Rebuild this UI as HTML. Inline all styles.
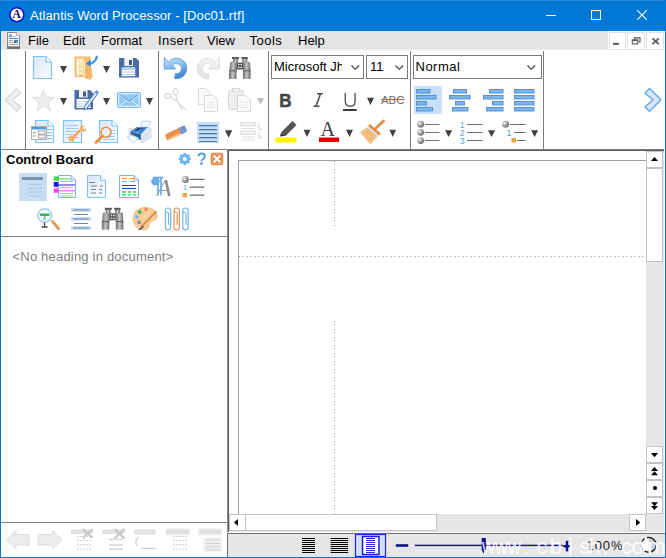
<!DOCTYPE html>
<html><head><meta charset="utf-8">
<style>
*{margin:0;padding:0;box-sizing:border-box}
html,body{width:666px;height:558px;overflow:hidden;background:#fff;font-family:"Liberation Sans",sans-serif}
.a{position:absolute}
#title{left:0;top:0;width:666px;height:31px;background:#0078d7}
#ttext{left:30px;top:8px;color:#fff;font-size:13px;white-space:pre;letter-spacing:0.1px}
#bl{left:0;top:0;width:1px;height:558px;background:#0078d7}
#br{left:665px;top:0;width:1px;height:558px;background:#0078d7}
#bb{left:0;top:557px;width:666px;height:1px;background:#0078d7}
#menu{left:1px;top:31px;width:664px;height:18px;background:#e4e4e4;border-bottom:1px solid #ededed;height:19px}
.mi{top:33px;font-size:13px;color:#000;white-space:pre}
.sep{width:1px;background:#7a7a7a}
.mdib{top:32px;width:18px;height:18px;background:#fff;border:1px solid #ddd}
.box{background:#fff;border:1px solid #7a7a7a}
.ctext{font-size:13px;color:#000;white-space:pre}
.sb{background:#fff;border:1px solid #c2c2c8}
.track{background:#e6e6e6}
</style></head><body>
<div class="a" id="title"></div>
<div class="a" style="left:0;top:0;width:666px;height:1px;background:#2f8ade"></div>
<div class="a" id="ttext">Atlantis Word Processor - [Doc01.rtf]</div>
<!-- title icon -->
<svg class="a" style="left:0;top:0" width="30" height="30" viewBox="0 0 30 30">
<circle cx="16.85" cy="14.65" r="7" fill="#fff" stroke="#1414c8" stroke-width="1.5"/>
<text x="16.7" y="17.9" text-anchor="middle" font-family="Liberation Serif" font-weight="bold" font-size="11.5" fill="#0a0a6a">A</text>
</svg>
<!-- caption buttons -->
<div class="a" style="left:546px;top:15px;width:10px;height:1px;background:#fff"></div>
<div class="a" style="left:591px;top:10px;width:10px;height:10px;border:1px solid #fff"></div>
<svg class="a" style="left:637px;top:10px" width="10" height="10" viewBox="0 0 10 10"><path d="M0 0L10 10M10 0L0 10" stroke="#fff" stroke-width="1.1"/></svg>

<div class="a" id="menu"></div>
<div class="a mi" style="left:28px">File</div>
<div class="a mi" style="left:63px">Edit</div>
<div class="a mi" style="left:101px">Format</div>
<div class="a mi" style="left:158px;letter-spacing:0.4px">Insert</div>
<div class="a mi" style="left:207px">View</div>
<div class="a mi" style="left:249.5px;letter-spacing:0.5px">Tools</div>
<div class="a mi" style="left:298px">Help</div>


<svg class="a" style="left:0;top:0" width="666" height="60" viewBox="0 0 666 60">
<rect x="608" y="31" width="57" height="19" fill="#fff"/>
<rect x="609.5" y="32.5" width="16" height="17" fill="#fff" stroke="#e0e0e0" stroke-width="1"/>
<rect x="627.5" y="32.5" width="17" height="17" fill="#fff" stroke="#e0e0e0" stroke-width="1"/>
<rect x="646.5" y="32.5" width="17" height="17" fill="#fff" stroke="#e0e0e0" stroke-width="1"/>
<rect x="613" y="42.8" width="6" height="2" fill="#5a5a5a"/>
<path d="M634.5 39.3 V37.8 H640 V42 H638.5" fill="none" stroke="#5a5a5a" stroke-width="1.2"/>
<rect x="632.3" y="40" width="5.5" height="4" fill="none" stroke="#5a5a5a" stroke-width="1.1"/>
<path d="M632.3 40.3 H637.8" stroke="#5a5a5a" stroke-width="1.6"/>
<path d="M652.5 38.3 L658.8 44.2 M658.8 38.3 L652.5 44.2" stroke="#5a5a5a" stroke-width="1.8"/>
<!-- menu doc icon -->
<path d="M7.5 32.5 H16.5 L19.5 35.5 V48.5 H7.5 Z" fill="#fff" stroke="#8a8a8a" stroke-width="1"/>
<rect x="7" y="46.3" width="13" height="2.5" fill="#707070"/>
<path d="M16.5 32.5 V35.5 H19.5" fill="#eee" stroke="#aaa" stroke-width="0.8"/>
<path d="M9 37.3 L10.5 34 L12 37.3 M9.6 36 H11.4" fill="none" stroke="#3c7ad8" stroke-width="0.9"/>
<path d="M13 36.5 H16" stroke="#999" stroke-width="0.7"/>
<path d="M9 38.5 H18" stroke="#4a78c0" stroke-width="0.9"/>
<path d="M9 40.5 H13 M9 42.5 H13 M9 44.5 H18" stroke="#888" stroke-width="0.8"/>
<rect x="14" y="39.8" width="4" height="3" fill="#3a8ae0"/>
<rect x="14" y="41.5" width="1.5" height="1.3" fill="#333"/>
</svg>
<!-- mdi buttons -->

<!-- toolbar separators -->
<div class="a sep" style="left:25px;top:51px;height:98px"></div>
<div class="a sep" style="left:158px;top:51px;height:98px"></div>
<div class="a sep" style="left:268px;top:51px;height:98px"></div>
<div class="a sep" style="left:410px;top:51px;height:98px"></div>
<div class="a sep" style="left:543px;top:51px;height:98px"></div>

<!-- combo boxes -->
<div class="a box" style="left:271px;top:55px;width:93px;height:24px"></div>
<div class="a ctext" style="left:274px;top:59px;width:68px;overflow:hidden">Microsoft Jh</div>
<div class="a box" style="left:366px;top:55px;width:42px;height:24px"></div>
<div class="a ctext" style="left:370px;top:59px">11</div>
<div class="a box" style="left:413px;top:55px;width:129px;height:24px"></div>
<div class="a ctext" style="left:415.5px;top:59px;letter-spacing:0.5px">Normal</div>


<svg class="a" style="left:0;top:0" width="666" height="558"><g fill="none" stroke="#333" stroke-width="1.1">
<path d="M351.5 65.5 L355.3 69.3 L359.1 65.5"/>
<path d="M395.5 65.5 L399.3 69.3 L403.1 65.5"/>
<path d="M527.5 65.5 L531.3 69.3 L535.1 65.5"/>
</g></svg>
<!-- toolbar bottom line -->
<div class="a" style="left:1px;top:149px;width:226px;height:1px;background:#808080"></div>
<div class="a" style="left:227px;top:149px;width:437px;height:1px;background:#7a7a7a"></div>
<div class="a" style="left:228px;top:150px;width:436px;height:1px;background:#5e5e5e"></div>

<!-- left pane -->
<div class="a" style="left:6px;top:152px;font-size:13px;font-weight:bold;color:#000;white-space:pre">Control Board</div>
<div class="a" style="left:1px;top:236px;width:226px;height:1px;background:#808080"></div>
<div class="a" style="left:12.5px;top:249px;font-size:13px;color:#808080;white-space:pre;letter-spacing:0.2px">&lt;No heading in document&gt;</div>
<div class="a" style="left:1px;top:522px;width:226px;height:1px;background:#808080"></div>

<!-- splitter -->
<div class="a" style="left:227px;top:149px;width:1px;height:383px;background:#8a8a8a"></div>
<div class="a" style="left:228px;top:150px;width:1px;height:382px;background:#5e5e5e"></div>

<!-- doc page border -->
<div class="a" style="left:238px;top:160px;width:408px;height:1px;background:#a0a0a0"></div>
<div class="a" style="left:238px;top:160px;width:1px;height:354px;background:#a0a0a0"></div>

<!-- v scrollbar -->
<div class="a track" style="left:646px;top:151px;width:18px;height:363px"></div>
<div class="a sb" style="left:646px;top:151px;width:17px;height:17px"></div>
<div class="a sb" style="left:646px;top:168px;width:17px;height:94px"></div>
<div class="a sb" style="left:646px;top:446px;width:17px;height:17px"></div>
<div class="a sb" style="left:646px;top:463px;width:17px;height:17px"></div>
<div class="a sb" style="left:646px;top:480px;width:17px;height:17px"></div>
<div class="a sb" style="left:646px;top:497px;width:17px;height:17px"></div>

<!-- h scrollbar -->
<div class="a track" style="left:229px;top:514px;width:435px;height:18px"></div>
<div class="a" style="left:229px;top:532px;width:436px;height:1px;background:#fafafa"></div>
<div class="a sb" style="left:229px;top:514px;width:17px;height:17px"></div>
<div class="a sb" style="left:245px;top:514px;width:192px;height:17px"></div>
<div class="a sb" style="left:629px;top:514px;width:17px;height:17px"></div>

<!-- status bar -->
<div class="a" style="left:227px;top:533px;width:438px;height:1px;background:#707070"></div>
<div class="a" style="left:227px;top:533px;width:1px;height:24px;background:#707070"></div>
<div class="a track" style="left:228px;top:534px;width:437px;height:23px"></div>
<div class="a" style="left:586.5px;top:538px;font-size:13px;color:#1a1a1a;white-space:pre;letter-spacing:0.9px">100%</div>


<svg class="a" style="left:0;top:0" width="666" height="558" viewBox="0 0 666 558">
<defs>
<linearGradient id="docg" x1="0" y1="0" x2="1" y2="1"><stop offset="0" stop-color="#d8e4fb"/><stop offset="0.6" stop-color="#eef5fd"/><stop offset="1" stop-color="#fafcff"/></linearGradient>
<linearGradient id="blueg" x1="0" y1="0" x2="0" y2="1"><stop offset="0" stop-color="#a9d2f6"/><stop offset="1" stop-color="#3f8ddb"/></linearGradient>
<radialGradient id="ballg" cx="0.35" cy="0.35" r="0.7"><stop offset="0" stop-color="#f4f4f4"/><stop offset="0.6" stop-color="#9a9a9a"/><stop offset="1" stop-color="#5e5e5e"/></radialGradient>
<linearGradient id="binog" x1="0" y1="0" x2="1" y2="0"><stop offset="0" stop-color="#6e6e6e"/><stop offset="0.5" stop-color="#c4c4c4"/><stop offset="1" stop-color="#6a6a6a"/></linearGradient>
</defs>
<!-- chevrons -->
<path d="M20.8 93 L16.5 88.6 L5 99.7 L16.5 111.2 L20.8 107 L12.5 99.7 Z" fill="#efefef" stroke="#d9d9d9" stroke-width="1.3" stroke-linejoin="round"/>
<path d="M645 93 L649.5 88.6 L661 99.7 L649.5 111.2 L645 107 L653 99.7 Z" fill="#dde6fa" stroke="#5aaaf0" stroke-width="1.4" stroke-linejoin="round"/>

<!-- group1 row1 -->
<path d="M33.5 56.5 H46 L51.5 62 V78.5 H33.5 Z" fill="url(#docg)" stroke="#7cc4f8" stroke-width="1.2"/>
<path d="M46 56.5 V62 H51.5" fill="#fff" stroke="#7cc4f8" stroke-width="1.2"/>
<path d="M60 66 H67 L63.5 73 Z" fill="#404040"/>
<!-- open folder -->
<path d="M74.5 56.5 H90.5 V77 H74.5 Z" fill="#f2bd72"/>
<path d="M76.5 58.5 H84 V75 H76.5 Z" fill="#f9e9b8"/>
<path d="M77.8 58.5 V76" stroke="#fff" stroke-width="1.2"/>
<path d="M83.5 60.5 L90.5 63.5 L92.8 76.5 L90 80 L83.5 77.5 Z" fill="#f3b86a"/>
<path d="M84.3 61 V77.5" stroke="#fff" stroke-width="0.9"/>
<path d="M78.5 67 H82 M78.5 71 H82" stroke="#f3c888" stroke-width="1"/>
<path d="M87 66 L88 66.5 M86.5 70 L87.5 70.5 M88.5 73 L89.5 73.5" stroke="#e8874a" stroke-width="1"/>
<path d="M96.8 56.8 C96 60.5 93 63.5 89 63.6" fill="none" stroke="#4a96e4" stroke-width="2.4" stroke-linecap="round"/>
<path d="M90.5 59.3 L85.8 63.8 L91 66.8 Z" fill="#3d88dc"/>
<path d="M103 66 H110 L106.5 73 Z" fill="#404040"/>
<!-- save -->
<path d="M119 58 H136 L139 61 V77.5 H119 Z" fill="#4a6da7"/>
<rect x="124.3" y="58" width="8.7" height="8" fill="#f4f4f4"/>
<rect x="129" y="60" width="3" height="5" fill="#3a5a98"/>
<rect x="121.7" y="67.2" width="13.5" height="9" fill="#fff"/>
<path d="M122 69.5 H135 M122 72 H135 M122 74.5 H135" stroke="#b4cdea" stroke-width="1"/>
<path d="M122 68 H135" stroke="#6fb2ee" stroke-width="1"/>

<!-- group1 row2 -->
<path d="M43.5 89.5 L46.3 97.3 L54.5 97.5 L48 102.6 L50.4 110.8 L43.5 106 L36.6 110.8 L39 102.6 L32.5 97.5 L40.7 97.3 Z" fill="#eeeeee" stroke="#dedede" stroke-width="1"/>
<path d="M60 98 H67 L63.5 105 Z" fill="#404040"/>
<!-- save as -->
<path d="M74.5 90 H90 L93 93 V109.5 H74.5 Z" fill="#4a6da7"/>
<rect x="79" y="90" width="8.5" height="7.5" fill="#f4f4f4"/>
<rect x="83" y="91.5" width="3" height="5" fill="#3a5a98"/>
<rect x="76.5" y="99" width="14" height="9" fill="#fff"/>
<path d="M77 101.5 H90 M77 104 H90 M77 106.5 H90" stroke="#b4cdea" stroke-width="1"/>
<path d="M84.5 106.5 L95.2 92 L97.6 93.8 L87 108.3 L84 109.8 Z" fill="#dce9f8" stroke="#3a68b0" stroke-width="0.9"/>
<path d="M95.2 92 L96.5 90.3 L98.9 92.1 L97.6 93.8 Z" fill="#5a90d8"/>
<path d="M103 98 H110 L106.5 105 Z" fill="#404040"/>
<!-- mail -->
<rect x="117.5" y="92.5" width="23" height="15" rx="1.5" fill="#8ecaf7" stroke="#72bdf5" stroke-width="1.2"/>
<rect x="118.8" y="93.8" width="20.4" height="12.4" fill="none" stroke="#fff" stroke-width="0.9"/>
<path d="M119.5 94.5 L129 101.5 L138.5 94.5" fill="none" stroke="#3a6fc0" stroke-width="0.8"/>
<path d="M120 95.5 L129 102.5 L138 95.5" fill="none" stroke="#fff" stroke-width="0.7"/>
<path d="M119.5 106 L126.5 100.5 M138.5 106 L131.5 100.5" fill="none" stroke="#f0f8ff" stroke-width="0.9"/>
<path d="M146 98 H153 L149.5 105 Z" fill="#404040"/>

<!-- group1 row3 -->
<path d="M35.5 120.5 H48 L53.5 126 V142.5 H35.5 Z" fill="url(#docg)" stroke="#7cc4f8" stroke-width="1.1"/>
<path d="M48 120.5 V126 H53.5" fill="#fff" stroke="#7cc4f8" stroke-width="1.1"/>
<path d="M47 129.5 H52 M47 132.5 H52 M47 135.5 H52 M47 138.5 H52" stroke="#8cc2ef" stroke-width="1"/>
<rect x="31.5" y="126.5" width="15" height="13" fill="#fdfdfd" stroke="#a6a6a6" stroke-width="0.9"/>
<rect x="32" y="127" width="14" height="2.5" fill="#4f9be6"/>
<path d="M33 132.5 H36 M33 136 H36" stroke="#9b9b9b" stroke-width="1"/>
<rect x="38.5" y="131" width="6.5" height="3" fill="none" stroke="#9b9b9b" stroke-width="0.9"/>
<rect x="38.5" y="135" width="6.5" height="3" fill="none" stroke="#9b9b9b" stroke-width="0.9"/>

<path d="M63.5 120.5 H81.5 V142.5 H63.5 Z" fill="url(#docg)" stroke="#7cc4f8" stroke-width="1.1"/>
<path d="M66 125.5 H78 M66 128.5 H78 M66 131.5 H78 M66 134.5 H78 M66 137.5 H78" stroke="#9ccaf2" stroke-width="1"/>
<path d="M72.5 138 L81.5 129" stroke="#f3b468" stroke-width="3" stroke-linecap="round"/>
<path d="M80 126.8 L82.5 124.8 L84 126.5 L82.5 128 L84.5 129.5 L86 128 L86.3 130.3 L83.5 132.3 L80.5 130.5 Z" fill="#f3b468"/>
<path d="M68 137.5 L71 135.3 L74.5 139 L73.5 142.8 L72 141 L70 142 L69 140 Z" fill="#f3b468"/>
<path d="M74 137 L80 131" stroke="#e08a40" stroke-width="0.8" stroke-dasharray="1 1"/>
<path d="M99.5 120.5 H112 L117.5 126 V142.5 H99.5 Z" fill="url(#docg)" stroke="#7cc4f8" stroke-width="1.1"/>
<path d="M112 120.5 V126 H117.5" fill="#fff" stroke="#7cc4f8" stroke-width="1.1"/>
<path d="M109 130.5 H115 M109 133.5 H115 M109 136.5 H115 M103 139.5 H115" stroke="#9ccaf2" stroke-width="1"/>
<circle cx="106" cy="132.3" r="5" fill="#e8f2fb" fill-opacity="0.8" stroke="#e9903c" stroke-width="1.6"/>
<path d="M102.5 136 L96 142.5" stroke="#e9903c" stroke-width="2.6" stroke-linecap="round"/>

<!-- printer -->
<path d="M140.6 127 L142.3 121.3 H150.8 L148.1 127.3 Z" fill="#fafdff" stroke="#9fcbef" stroke-width="0.9"/>
<path d="M129 128.5 H132 V134.6 H129 Z" fill="#e8eaee" stroke="#c4c8ce" stroke-width="0.6"/>
<path d="M130.5 131.5 L136.5 127 H148 L141 134.6 Z" fill="#3d80d8"/>
<path d="M133 130.5 L137.5 128 H145 M134 132.5 H140" stroke="#7fb2ec" stroke-width="0.8"/>
<path d="M130.5 131.5 L141 134.6 V140 L130.5 137 Z" fill="#2f5f9e"/>
<path d="M141 134.6 L148 127 L151 128.5 V137.5 L141.5 143 Z" fill="#dde8f3" stroke="#b8cde2" stroke-width="0.6"/>
<path d="M143.5 137 L149 133.5 M143.5 140 L149 136.5" stroke="#a9c9ea" stroke-width="0.7" stroke-dasharray="1 1"/>
<path d="M127 137.3 L131 134.8 L138.6 138 L133.5 142.6 Z" fill="#fafdff" stroke="#9fcbef" stroke-width="0.9"/>
<!-- group2 -->
<defs><linearGradient id="undog" x1="0" y1="0" x2="0.3" y2="1"><stop offset="0" stop-color="#d2e8fc"/><stop offset="0.45" stop-color="#8cc0f2"/><stop offset="1" stop-color="#3f86d8"/></linearGradient>
<linearGradient id="redog" x1="0" y1="0" x2="0.3" y2="1"><stop offset="0" stop-color="#f6f6f6"/><stop offset="1" stop-color="#e2e2e2"/></linearGradient></defs>
<path d="M164.3 57.5 L168.5 62 A10.3 10.3 0 1 1 174.5 78.6 L175.5 73.4 A5 5 0 1 0 172.5 65.5 L175.5 69 H164.3 Z" fill="url(#undog)" stroke="#5b8fd0" stroke-width="0.8" stroke-linejoin="round"/>
<path transform="translate(383.8 0) scale(-1 1)" d="M164.3 57.5 L168.5 62 A10.3 10.3 0 1 1 174.5 78.6 L175.5 73.4 A5 5 0 1 0 172.5 65.5 L175.5 69 H164.3 Z" fill="url(#redog)" stroke="#dadada" stroke-width="0.8" stroke-linejoin="round"/>
<!-- binoculars -->
<g id="bino">
<path d="M230 62.5 Q230.5 61.5 233 61.5 H237 V70.5 H229.5 Z" fill="url(#binog)"/>
<path d="M250 62.5 Q249.5 61.5 247 61.5 H243 V70.5 H250.5 Z" fill="url(#binog)"/>
<rect x="229" y="70.5" width="7.5" height="8.5" rx="0.8" fill="url(#binog)"/>
<rect x="243" y="70.5" width="7.6" height="8.5" rx="0.8" fill="url(#binog)"/>
<path d="M229 70.8 H236.5 M243 70.8 H250.6" stroke="#555" stroke-width="1"/>
<rect x="233" y="58" width="5" height="4.5" fill="url(#binog)"/>
<rect x="242.3" y="58" width="5" height="4.5" fill="url(#binog)"/>
<rect x="232" y="57" width="7" height="2" fill="#5a5a5a"/>
<rect x="241.3" y="57" width="6.5" height="2" fill="#5a5a5a"/>
<rect x="237" y="62.5" width="6" height="7" fill="#555"/>
<circle cx="238.8" cy="64.6" r="0.8" fill="#eee"/><circle cx="241.2" cy="64.6" r="0.8" fill="#eee"/>
<circle cx="238.8" cy="67.4" r="0.8" fill="#eee"/><circle cx="241.2" cy="67.4" r="0.8" fill="#eee"/>
</g>
<!-- scissors -->
<g fill="none" stroke="#d7d7d7" stroke-width="1.1">
<ellipse cx="175.5" cy="91.5" rx="2.2" ry="3.2"/>
<ellipse cx="168" cy="96" rx="3.2" ry="2.2"/>
<path d="M175.5 95 L178.5 104 L186.5 110 M170.5 97.5 L178 101.5 L182 110.5"/>
</g>
<!-- copy -->
<g fill="#fafafa" stroke="#d9d9d9" stroke-width="1">
<path d="M198.5 88.5 H206 L210 92.5 V104.5 H198.5 Z"/>
<path d="M204.5 95.5 H213 L217.5 100 V111.5 H204.5 Z"/>
</g>
<path d="M206.5 102.5 H215 M206.5 105 H215 M206.5 107.5 H215" stroke="#e0e0e0" stroke-width="0.8"/>
<!-- paste -->
<rect x="228.5" y="90.5" width="15" height="19" rx="1.5" fill="#eeeeee" stroke="#d7d7d7" stroke-width="1"/>
<rect x="232.5" y="88.5" width="7" height="3" fill="#f6f6f6" stroke="#d0d0d0" stroke-width="0.8"/>
<path d="M237.5 95.5 H246 L250.5 100 V111.5 H237.5 Z" fill="#fafafa" stroke="#d9d9d9" stroke-width="1"/>
<path d="M239.5 102.5 H248 M239.5 105 H248 M239.5 107.5 H248" stroke="#e0e0e0" stroke-width="0.8"/>
<path d="M257 98 H264 L260.5 104.6 Z" fill="#bcbcbc"/>

<!-- eraser -->
<g transform="translate(176 133) rotate(-25)">
<rect x="-11" y="-3.4" width="22" height="6.8" rx="2" fill="#ec9050"/>
<path d="M4.5 -3.4 H9 Q11 -3.4 11 -1.4 V1.4 Q11 3.4 9 3.4 H4.5 Z" fill="#6d9ad6"/>
<path d="M-10 2.5 H4" stroke="#fbd59a" stroke-width="1.2"/>
</g>
<!-- lines -->
<rect x="197" y="122" width="22" height="21" fill="#c6def7"/>
<path d="M199 125.5 H217 M199 129.5 H217 M199 133.5 H217 M199 137.5 H217 M199 141.5 H217" stroke="#4f74a8" stroke-width="1"/><path d="M199 126.5 H217 M199 130.5 H217 M199 134.5 H217 M199 138.5 H217" stroke="#9fbde0" stroke-width="1"/>
<path d="M225 130.2 H232.3 L228.6 137.7 Z" fill="#404040"/>
<!-- doc-list disabled -->
<g fill="#f2f2f2" stroke="#dadada" stroke-width="0.8">
<rect x="240.5" y="122.5" width="15" height="3.5"/>
<rect x="240.5" y="131" width="15" height="3.5"/>
</g>
<path d="M242 128.5 H255 M242 137 H255 M242 140 H255" stroke="#dcdcdc" stroke-width="1"/>
<path d="M259 123 V129.5 H262 M259 131.5 V138 H262" fill="none" stroke="#cfcfcf" stroke-width="0.9"/>

<!-- group3 -->
<text x="279.3" y="106.5" font-family="Liberation Sans" font-weight="bold" font-size="18.5" fill="#434343" stroke="#434343" stroke-width="0.5" textLength="12.3" lengthAdjust="spacingAndGlyphs">B</text>
<path d="M317 93.8 H323 M313.5 106.2 H319.5 M320.5 93.8 L316 106.2" stroke="#505050" stroke-width="1.6" fill="none"/>
<path d="M345.3 93 V101 Q345.3 106.2 350.2 106.2 Q355.1 106.2 355.1 101 V93" stroke="#555" stroke-width="1.4" fill="none"/>
<rect x="343" y="109" width="13.7" height="2" fill="#3a3a3a"/>
<path d="M367 97.7 H374 L370.5 105 Z" fill="#404040"/>
<text x="381" y="103.5" font-family="Liberation Sans" font-size="10" fill="#6a6a6a" textLength="23.5" lengthAdjust="spacingAndGlyphs">ABC</text>
<path d="M381 99.5 H405" stroke="#b9713e" stroke-width="1.1"/>

<path d="M280.5 136 L281.5 132 L292.5 121 L296.5 125 L285.5 136 Z" fill="#555555"/>
<path d="M280 136.5 L281 133 L284 136 Z" fill="#333"/>
<rect x="275.5" y="137.5" width="21" height="5" fill="#fff200"/>
<path d="M303.6 129.8 H310.5 L307 137 Z" fill="#404040"/>
<text x="320.5" y="135.7" font-family="Liberation Serif" font-size="20" fill="#3c3c3c">A</text>
<rect x="319" y="137.5" width="20" height="4.5" fill="#e60000"/>
<path d="M346 129.8 H353 L349.5 137 Z" fill="#404040"/>
<!-- brush -->
<path d="M367.5 127.5 L377.5 135.8 L370.5 144 L360.5 132.5 Z" fill="#f6c384" stroke="#eeb070" stroke-width="0.6"/>
<path d="M363.5 133 L371 139.5 M365.5 130.8 L373 137.3 M367.5 128.6 L375 135.1" stroke="#e9a060" stroke-width="0.8"/>
<path d="M367.2 127.2 L377.8 136" stroke="#d8dde8" stroke-width="1.6"/>
<path d="M369.8 125.8 L379 133.8" stroke="#e3894a" stroke-width="2.8" stroke-linecap="round"/>
<path d="M375.5 128.5 L383.5 121" stroke="#e58c4c" stroke-width="3" stroke-linecap="round"/>
<path d="M389.4 129.8 H396.1 L392.75 137 Z" fill="#404040"/>

<!-- group4 align -->
<rect x="414" y="86" width="28" height="28" fill="#c6e1f8"/>
<g fill="#7fb4ea" stroke="#4d8ad0" stroke-width="0.9">
<rect x="416.5" y="89.5" width="13.5" height="3.5"/>
<rect x="416.5" y="95.5" width="19.5" height="3.5"/>
<rect x="416.5" y="101.5" width="10" height="3.5"/>
<rect x="416.5" y="107.5" width="16" height="3.5"/>
<rect x="453.5" y="89.5" width="13" height="3.5"/>
<rect x="449.5" y="95.5" width="20.5" height="3.5"/>
<rect x="455.5" y="101.5" width="9" height="3.5"/>
<rect x="452.5" y="107.5" width="15.5" height="3.5"/>
<rect x="489.5" y="89.5" width="13.5" height="3.5"/>
<rect x="483.5" y="95.5" width="19.5" height="3.5"/>
<rect x="492.5" y="101.5" width="10.5" height="3.5"/>
<rect x="486.5" y="107.5" width="16.5" height="3.5"/>
<rect x="514.5" y="89.5" width="19.5" height="3.5"/>
<rect x="514.5" y="95.5" width="19.5" height="3.5"/>
<rect x="514.5" y="101.5" width="19.5" height="3.5"/>
<rect x="514.5" y="107.5" width="19.5" height="3.5"/>
</g>
<!-- bullets -->
<circle cx="420.6" cy="124.2" r="3.4" fill="url(#ballg)"/>
<circle cx="420.6" cy="132.3" r="3.4" fill="url(#ballg)"/>
<circle cx="420.6" cy="140.6" r="3.4" fill="url(#ballg)"/>
<path d="M425 124.5 H439.5 M425 132.5 H439.5 M425 140.5 H439.5" stroke="#6f6f6f" stroke-width="1.2"/>
<path d="M445 130.2 H452.2 L448.6 137.1 Z" fill="#404040"/>
<text x="459.8" y="127.6" font-family="Liberation Sans" font-size="8.8" fill="#5aa0e0">1</text>
<text x="459.8" y="135.6" font-family="Liberation Sans" font-size="8.8" fill="#5aa0e0">2</text>
<text x="459.8" y="143.8" font-family="Liberation Sans" font-size="8.8" fill="#5aa0e0">3</text>
<path d="M467 124.5 H482.5 M467 132.5 H482.5 M467 140.5 H482.5" stroke="#6f6f6f" stroke-width="1.2"/>
<path d="M488 130.2 H495.1 L491.5 137.1 Z" fill="#404040"/>
<circle cx="505.6" cy="124.2" r="3.4" fill="url(#ballg)"/>
<text x="506.5" y="135.6" font-family="Liberation Sans" font-size="8.8" fill="#5aa0e0">1</text>
<rect x="511.5" y="138" width="4.5" height="4.5" fill="#f0a040"/>
<path d="M510 124.5 H525.5 M514 132.5 H525.5 M517 140.5 H525.5" stroke="#6f6f6f" stroke-width="1.2"/>
<path d="M531.2 130.2 H538.1 L534.6 137.1 Z" fill="#404040"/>
</svg>


<svg class="a" style="left:0;top:0" width="666" height="558" viewBox="0 0 666 558">
<defs>
<linearGradient id="docg2" x1="0" y1="0" x2="1" y2="1"><stop offset="0" stop-color="#d8e4fb"/><stop offset="0.6" stop-color="#eef5fd"/><stop offset="1" stop-color="#fafcff"/></linearGradient>
<linearGradient id="binog2" x1="0" y1="0" x2="1" y2="0"><stop offset="0" stop-color="#6e6e6e"/><stop offset="0.5" stop-color="#c4c4c4"/><stop offset="1" stop-color="#6a6a6a"/></linearGradient>
<radialGradient id="ballg2" cx="0.35" cy="0.35" r="0.7"><stop offset="0" stop-color="#f4f4f4"/><stop offset="0.6" stop-color="#9a9a9a"/><stop offset="1" stop-color="#5e5e5e"/></radialGradient>
</defs>
<!-- control board header icons -->
<g transform="translate(184.8 158.9)">
<path d="M-1.3 -6 H1.3 L1.8 -4 L3.6 -5 L5.4 -3.2 L4.2 -1.5 L6 -1.2 V1.2 L4.2 1.5 L5.4 3.2 L3.6 5 L1.8 4 L1.3 6 H-1.3 L-1.8 4 L-3.6 5 L-5.4 3.2 L-4.2 1.5 L-6 1.2 V-1.2 L-4.2 -1.5 L-5.4 -3.2 L-3.6 -5 L-1.8 -4 Z" fill="#6cb6f0"/>
<circle r="2" fill="#fff"/>
</g>
<path d="M198.2 156.3 Q198.8 153.5 201.6 153.5 Q204.8 153.5 204.8 156.2 Q204.8 158.2 202.8 159.2 Q201.6 159.9 201.4 161.2" fill="none" stroke="#4a9be8" stroke-width="1.9"/>
<rect x="200.3" y="162.3" width="2.4" height="2.4" fill="#4a9be8"/>
<rect x="211.5" y="153.5" width="11" height="11" rx="1.5" fill="#fff" stroke="#e8874a" stroke-width="1.6"/>
<rect x="212.3" y="154.3" width="9.4" height="9.4" fill="#e8874a"/>
<path d="M213.8 155.8 L220.2 162.2 M220.2 155.8 L213.8 162.2" stroke="#fff" stroke-width="2"/>

<!-- cb icon 1 selected -->
<rect x="19" y="173" width="28" height="28" fill="#c6ddf5"/>
<rect x="22" y="177" width="21" height="3" fill="#7d8fab"/>
<path d="M28 184.5 H43 M28 188.3 H43 M28 192 H43 M28 196 H43" stroke="#a9bcd2" stroke-width="1" stroke-dasharray="1.5 1"/>
<!-- cb icon 2 -->
<path d="M58.5 175.5 H71 L75.5 180 V197.5 H58.5 Z" fill="#fff" stroke="#7cb4e8" stroke-width="1"/>
<path d="M71 175.5 V180 H75.5" fill="none" stroke="#7cb4e8" stroke-width="1"/>
<rect x="53.7" y="176.3" width="4.5" height="4.5" fill="#44dd44"/>
<rect x="53.7" y="182" width="4.5" height="4.8" fill="#1a1ae0"/>
<rect x="53.7" y="188.3" width="4.5" height="4.5" fill="#ff44ff"/>
<path d="M58 179 H70" stroke="#44dd44" stroke-width="1"/>
<path d="M58 185 H75" stroke="#1a1ae0" stroke-width="1"/>
<path d="M58 190.8 H75" stroke="#ff44ff" stroke-width="1"/>
<path d="M60 181.5 H73 M60 187.5 H73 M60 193.5 H73 M60 196 H73" stroke="#9cc4ea" stroke-width="1"/>
<!-- cb icon 3 -->
<path d="M87.5 175.5 H100.5 L105.5 180.5 V197.5 H87.5 Z" fill="url(#docg2)" stroke="#7cc4f8" stroke-width="1"/>
<path d="M100.5 175.5 V180.5 H105.5" fill="#fff" stroke="#7cc4f8" stroke-width="1"/>
<path d="M89 182.5 H95 M91 186 H97 M100 186 H103 M91 189.5 H96 M99 189.5 H102 M91 193 H96 M99 193 H102" stroke="#666" stroke-width="0.8"/>
<!-- cb icon 4 -->
<path d="M119.5 175.5 H134 L138.5 180 V197.5 H119.5 Z" fill="#fff" stroke="#7cb4e8" stroke-width="1"/>
<path d="M134 175.5 V180 H138.5" fill="none" stroke="#7cb4e8" stroke-width="1"/>
<path d="M122 178.5 H127 M130 178.5 H135 M122 181.5 H127 M130 181.5 H135" stroke="#e89060" stroke-width="1"/>
<path d="M122 185.5 H136 M122 188.5 H136" stroke="#2040e0" stroke-width="1.2"/>
<path d="M122 192 H126 M128 192 H131 M133 192 H136 M122 194.8 H126 M128 194.8 H131 M133 194.8 H136" stroke="#40d040" stroke-width="1.3"/>
<!-- cb icon 5 pilcrow A -->
<path d="M156.5 196 L165.5 180" stroke="#9a9a9a" stroke-width="1"/>
<path d="M165.8 180 L169.3 196" stroke="#8a8a8a" stroke-width="2.6"/>
<path d="M159 190.5 H167.5" stroke="#9a9a9a" stroke-width="1"/>
<path d="M153 177.6 H163 M158 177.6 V195.5 M161 177.6 V195.5" stroke="#5aa2e6" stroke-width="1.5"/>
<ellipse cx="155.5" cy="181.5" rx="4.3" ry="4" fill="#6aaaea"/>
<!-- cb icon 6 -->
<circle cx="185.3" cy="179.6" r="3.5" fill="url(#ballg2)"/>
<text x="182.8" y="190.2" font-family="Liberation Sans" font-size="8" fill="#5aa2e6">1</text>
<rect x="182.5" y="193" width="4.5" height="4.3" fill="#f0a850"/>
<path d="M189.6 179.3 H204.6 M189.6 187.2 H204.6 M189.6 195.2 H204.6" stroke="#707070" stroke-width="1.2"/>

<!-- cb row2 icon 7 magnifier -->
<circle cx="44.7" cy="215.5" r="6.8" fill="#f4f9fd" stroke="#a6cdef" stroke-width="1.6"/>
<rect x="40" y="213.5" width="9.5" height="2.5" fill="#40b060"/>
<rect x="43.5" y="216" width="2.5" height="4" fill="#9cc"/>
<path d="M44.5 222.5 V227 M41.5 227 H47.5" stroke="#444" stroke-width="1.3"/>
<path d="M52.5 221.5 L58.5 228.5" stroke="#e89858" stroke-width="3" stroke-linecap="round"/>
<!-- icon 8 -->
<rect x="71" y="208" width="20" height="3.8" fill="#c6def7"/>
<rect x="71" y="217" width="20" height="3.6" fill="#c6def7"/>
<rect x="71" y="226" width="20" height="4" fill="#c6def7"/>
<path d="M73 210 H89 M74 214.5 H88 M73 219 H89 M74 223.5 H88 M73 228 H89" stroke="#5f7a98" stroke-width="0.9"/>
<!-- icon 9 binoculars -->
<use href="#bino" transform="translate(-127.2 150.8)"/>
<!-- icon 10 palette -->
<path d="M145 207.5 C153 207.5 157.5 212 157 217 C156.5 221 152 220 150 222.5 C148.5 224.5 150 228 146 229.5 C138 231.5 133.3 225 133.3 218.5 C133.3 212 138.5 207.5 145 207.5 Z" fill="#f5cf98" stroke="#e8b070" stroke-width="0.8"/>
<circle cx="139.8" cy="212" r="2" fill="#50b050"/>
<circle cx="137" cy="217" r="2" fill="#80b8f0"/>
<circle cx="139" cy="222.3" r="2" fill="#909090"/>
<circle cx="146" cy="209.5" r="1.8" fill="#e88858"/>
<path d="M156 212 L142 226" stroke="#e09050" stroke-width="2.2" stroke-linecap="round"/>
<path d="M142.5 225.5 L137.5 230.5 L141 229.5 L144 227 Z" fill="#606060"/>
<!-- icon 11 clips -->
<g fill="none" stroke-width="1.2">
<path d="M167.5 213 V226 Q167.5 229.5 165.3 229.5 Q165.3 229.5 165.3 229.5 M169.7 213 V226" stroke="#000" stroke-opacity="0"/>
<path d="M165.3 226 V211 Q165.3 208 168 208 Q170.7 208 170.7 211 V226.5 Q170.7 229.8 168 229.8 Q165.3 229.8 165.3 226.5 V214 Q165.3 212 166.9 212 Q168.5 212 168.5 214 V225" stroke="#70b4f0"/>
<path d="M174 226 V211 Q174 208 176.7 208 Q179.4 208 179.4 211 V226.5 Q179.4 229.8 176.7 229.8 Q174 229.8 174 226.5 V214 Q174 212 175.6 212 Q177.2 212 177.2 214 V225" stroke="#e89050"/>
<path d="M182.8 226 V211 Q182.8 208 185.5 208 Q188.2 208 188.2 211 V226.5 Q188.2 229.8 185.5 229.8 Q182.8 229.8 182.8 226.5 V214 Q182.8 212 184.4 212 Q186 212 186 214 V225" stroke="#70b4f0"/>
</g>

<!-- bottom-left toolbar (disabled) -->
<path d="M6.5 539.5 L16 530.5 V534.5 H29 V545 H16 V549 Z" fill="#ececec" stroke="#d8d8d8" stroke-width="0.8"/>
<path d="M62 539.5 L52.5 530.5 V534.5 H38 V545 H52.5 V549 Z" fill="#ececec" stroke="#d8d8d8" stroke-width="0.8"/>
<rect x="71.5" y="530" width="21" height="3.5" fill="#e4e4e4" stroke="#d4d4d4" stroke-width="0.6"/>
<path d="M77 536.5 H92 M77 540.5 H92 M77 544.5 H92 M77 549 H92" stroke="#d6d6d6" stroke-width="1" stroke-dasharray="2 1"/>
<path d="M83 529 L92.5 538 M92.5 529 L83 538" stroke="#c8c8c8" stroke-width="2.4"/>
<rect x="103" y="530" width="21" height="3.5" fill="#e4e4e4" stroke="#d4d4d4" stroke-width="0.6"/>
<path d="M109 539.5 H123 M109 545 H123 M109 549.3 H123" stroke="#d6d6d6" stroke-width="1.4"/>
<path d="M114.5 529 L124.5 538.5 M124.5 529 L114.5 538.5" stroke="#c8c8c8" stroke-width="2.4"/>
<rect x="135" y="530" width="20" height="4" fill="#e4e4e4" stroke="#d4d4d4" stroke-width="0.6"/>
<path d="M139 537 Q134.5 540 136.5 546 M141.3 548.3 H155.7" fill="none" stroke="#cfcfcf" stroke-width="1.2"/>
<rect x="165.7" y="528.3" width="24.3" height="7.2" fill="#efefef"/>
<rect x="167.5" y="530" width="20.5" height="3.5" fill="#e2e2e2" stroke="#d4d4d4" stroke-width="0.6"/>
<path d="M173 536.5 H187 M173 540.5 H187 M173 544.5 H187 M173 549 H187" stroke="#d6d6d6" stroke-width="1" stroke-dasharray="2 1"/>
<rect x="198.1" y="528.3" width="23.8" height="7.2" fill="#efefef"/>
<rect x="200" y="530" width="20" height="3.5" fill="#e2e2e2" stroke="#d4d4d4" stroke-width="0.6"/>
<rect x="203.5" y="537.3" width="18.4" height="14.4" fill="#efefef"/>
<path d="M206 540 H220 M206 543.5 H220 M206 547 H220 M206 550 H220" stroke="#d2d2d2" stroke-width="1"/>

<!-- status bar view icons -->
<path d="M302 538.5 H315 M302 540.5 H315 M302 542.5 H315 M302 544.5 H315 M302 546.5 H315 M302 548.5 H315 M302 550.5 H315 M302 552.5 H315" stroke="#000" stroke-width="1"/>
<path d="M330.6 538.5 H348.2 M330.6 540.5 H348.2 M330.6 542.5 H348.2 M330.6 544.5 H348.2 M330.6 546.5 H348.2 M330.6 548.5 H348.2 M330.6 550.5 H348.2 M330.6 552.5 H348.2" stroke="#000" stroke-width="1"/>
<rect x="355.5" y="534.5" width="30" height="22" fill="#d4e6f8" stroke="#1c1cff" stroke-width="1.2"/>
<rect x="362.5" y="536.5" width="16.5" height="18" fill="#fff" stroke="#1c1ccc" stroke-width="1.5"/>
<path d="M366 538.5 H375 M366 540.5 H375 M366 542.5 H375 M366 544.5 H375 M366 546.5 H375 M366 548.5 H375 M366 550.5 H375 M366 552.5 H375" stroke="#2a2ae0" stroke-width="1"/>
<path d="M358.5 537 V554 M382.5 537 V554" stroke="#b8c8dc" stroke-width="1" stroke-dasharray="1 1"/>
<!-- zoom -->
<rect x="395.8" y="544.2" width="12.4" height="2.6" fill="#10108a"/>
<rect x="414.8" y="544.7" width="148" height="1.4" fill="#10108a"/>
<path d="M481.7 538 H485.8 V550 L483.7 553.6 L481.7 550 Z" fill="#10108a"/>
<rect x="563.3" y="545" width="7.4" height="2.4" fill="#10108a"/>
<rect x="565.8" y="540.7" width="2.4" height="10.7" fill="#10108a"/>
<!-- circle icon -->
<circle cx="648.6" cy="544.8" r="7.4" fill="#fff"/>
<path d="M649.5 537.4 A7.4 7.4 0 0 1 649.5 552.2 Z" fill="#d6d6d6"/>
<path d="M652.5 541 Q655 544.8 652.5 550 Q654.5 545 652.5 541 Z" fill="#8a8a8a"/>
<path d="M649.3 537.4 V552.2" stroke="#bdbdbd" stroke-width="1"/>
<circle cx="648.6" cy="544.8" r="7.4" fill="none" stroke="#111" stroke-width="1.3" stroke-dasharray="12 2.5 4 2.5 6 2.5 4 2.5" stroke-dashoffset="3"/>
</svg>


<svg class="a" style="left:0;top:0" width="666" height="558" viewBox="0 0 666 558">
<!-- doc dotted lines -->
<path d="M334.5 161 V227 M334.5 321 V514" stroke="#9a9a9a" stroke-width="1" stroke-dasharray="1 2 1 4"/>
<path d="M239 256.5 H646" stroke="#9a9a9a" stroke-width="1" stroke-dasharray="1 2 1 4"/>
<!-- scroll glyphs -->
<g fill="#000">
<path d="M651 161 H658 L654.5 157 Z"/>
<path d="M651 453 H658 L654.5 457.2 Z"/>
<path d="M651 471 H658 L654.5 467 Z M651 475.3 H658 L654.5 471.3 Z"/>
<circle cx="655" cy="488" r="2"/>
<path d="M651 502.2 H658 L654.5 506.2 Z M651 506 H658 L654.5 510 Z"/>
<path d="M238 519 V526 L234 522.5 Z"/>
<path d="M636 519 V526 L640.2 522.5 Z"/>
</g>
<!-- watermark -->
<g font-family="Liberation Sans" font-size="22" fill="#fff" fill-opacity="0.9">
<text x="482" y="553.6" textLength="39" lengthAdjust="spacingAndGlyphs">www</text>
<text x="523.2" y="553.6">.</text>
<text x="536.6" y="553.6">c</text>
<text x="549.8" y="553.6">b</text>
<text x="567.9" y="553.6">i</text>
<text x="579.5" y="553.6">s</text>
<text x="588.5" y="553.6">h</text>
<text x="602.5" y="553.6">.</text>
<text x="621" y="553.6">c</text>
<text x="631.5" y="553.6">o</text>
<text x="647.5" y="553.6">m</text>
</g>
</svg>

<div class="a" id="bl"></div>
<div class="a" id="br"></div>
<div class="a" id="bb"></div>
</body></html>
